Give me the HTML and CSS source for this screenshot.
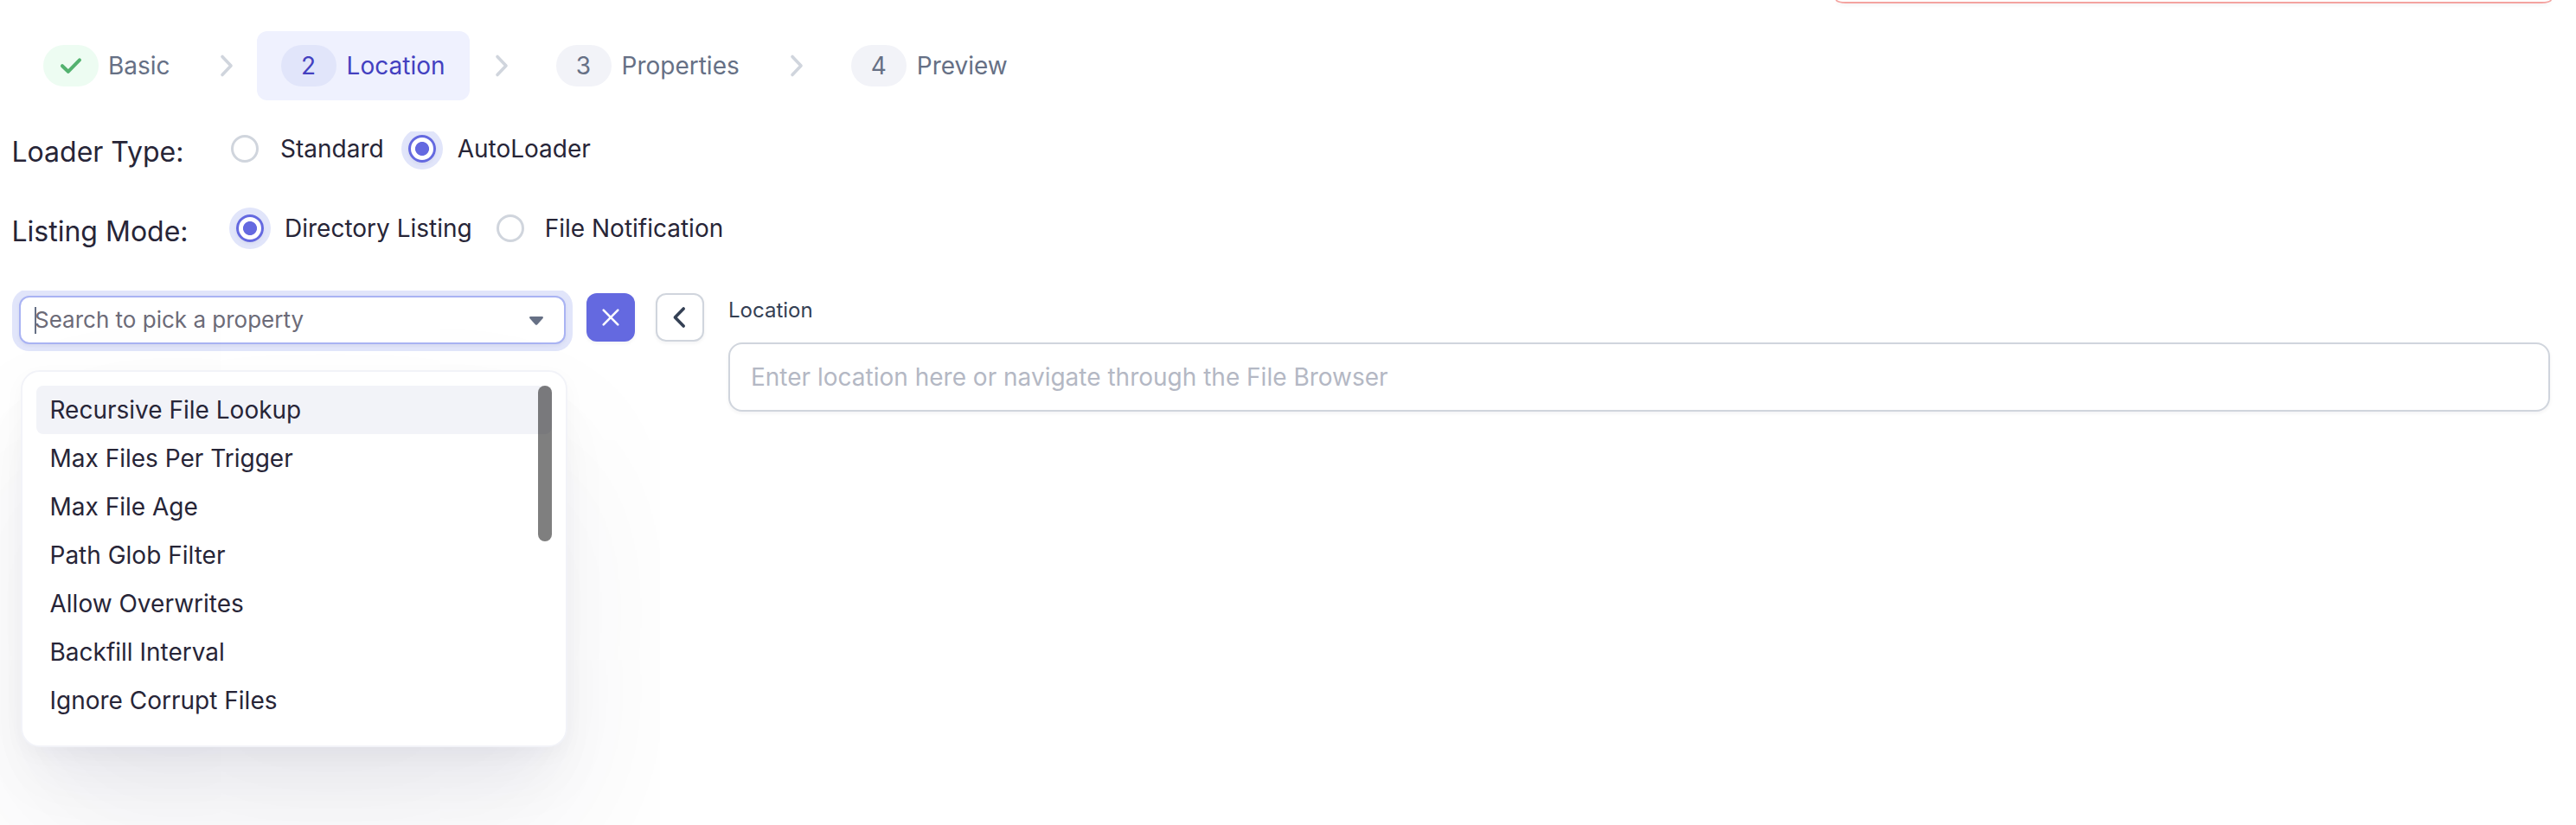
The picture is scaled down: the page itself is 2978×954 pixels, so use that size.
FILE: index.html
```html
<!DOCTYPE html>
<html lang="en">
<head>
<meta charset="utf-8">
<title>Location</title>
<link rel="stylesheet" href="styles.css">
</head>
<body>
<div class="alert"></div>
<nav class="steps">
  <div class="step step-done">
    <span class="badge badge-done"><svg width="28" height="24" viewBox="0 0 28 24"><path d="M4 12.2 10.8 18.8 24 5.4"/></svg></span>
    <span>Basic</span>
  </div>
  <svg class="sep" width="72" height="40" viewBox="0 0 72 40"><path d="M32 9.5 42 20 32 30.5"/></svg>
  <div class="step step-active">
    <span class="badge">2</span>
    <span>Location</span>
  </div>
  <svg class="sep" width="72" height="40" viewBox="0 0 72 40"><path d="M32 9.5 42 20 32 30.5"/></svg>
  <div class="step step-wide">
    <span class="badge">3</span>
    <span>Properties</span>
  </div>
  <svg class="sep" width="72" height="40" viewBox="0 0 72 40"><path d="M32 9.5 42 20 32 30.5"/></svg>
  <div class="step">
    <span class="badge">4</span>
    <span>Preview</span>
  </div>
</nav>

<div class="field loader">
  <div class="field-label">Loader Type:</div>
  <div class="options">
    <label class="option"><span class="radio"></span>Standard</label>
    <label class="option"><span class="radio radio-on"></span>AutoLoader</label>
  </div>
</div>
<div class="field listing">
  <div class="field-label">Listing Mode:</div>
  <div class="options">
    <label class="option"><span class="radio radio-on"></span>Directory Listing</label>
    <label class="option"><span class="radio"></span>File Notification</label>
  </div>
</div>

<main class="main">
  <div class="picker">
    <div class="select-clip">
      <div class="select">
        <span class="caret"></span>
        <span class="select-text">Search to pick a property</span>
        <svg width="16" height="10" viewBox="0 0 16 10"><path d="M1.4 0h13.2c1.2 0 1.8 1.3.9 2.2L9.2 9.2c-.7.8-1.7.8-2.4 0L.5 2.2C-.4 1.3.2 0 1.4 0z"/></svg>
      </div>
    </div>
    <div class="menu">
      <ul class="menu-list">
        <li class="item item-active">Recursive File Lookup</li>
        <li class="item">Max Files Per Trigger</li>
        <li class="item">Max File Age</li>
        <li class="item">Path Glob Filter</li>
        <li class="item">Allow Overwrites</li>
        <li class="item">Backfill Interval</li>
        <li class="item">Ignore Corrupt Files</li>
      </ul>
      <span class="thumb"></span>
    </div>
  </div>
  <button class="btn btn-primary" aria-label="Clear"><svg width="24" height="24" viewBox="0 0 24 24"><path d="M3.7 3.7 20.3 20.3M20.3 3.7 3.7 20.3"/></svg></button>
  <button class="btn btn-plain" aria-label="Back"><svg width="24" height="28" viewBox="0 0 24 28"><path d="M16.2 4 6.4 14 16.2 24"/></svg></button>
  <div class="location">
    <label class="location-label" for="loc">Location</label>
    <input class="location-input" id="loc" type="text" placeholder="Enter location here or navigate through the File Browser">
  </div>
</main>
</body>
</html>
```
FILE: styles.css
```css
* { box-sizing: border-box; }

body {
  margin: 0;
  height: 954px;
  overflow: hidden;
  background: #fff;
  color: #272537;
  font-family: Inter, "Liberation Sans", sans-serif;
  font-size: 28px;
  line-height: 40px;
}

.alert {
  width: 828px;
  height: 4px;
  margin-left: 2122px;
  border: 2px solid #f4a3a0;
  border-top: 0;
  border-radius: 0 0 12px 12px / 0 0 4px 4px;
  box-shadow: 0 2px 4px rgba(16, 24, 40, 0.05);
}

/* Step indicator */
.steps {
  display: flex;
  align-items: center;
  height: 80px;
  margin: 32px 0 0 22px;
  color: #667085;
}

.step {
  display: flex;
  align-items: center;
  gap: 12px;
  height: 80px;
  padding: 0 28px;
  border-radius: 12px;
}

.step-done { gap: 11px; }
.step-wide { padding-right: 29px; }
.step-active { background: #eff1fe; color: #4340c0; }

.badge {
  display: flex;
  align-items: center;
  justify-content: center;
  width: 64px;
  height: 48px;
  border-radius: 24px;
  background: #f2f3f8;
}

.step-active .badge { background: #e1e5fa; }
.badge-done { background: #edfcf2; }

.badge svg, .sep, .btn svg {
  fill: none;
  stroke-linecap: round;
  stroke-linejoin: round;
}

.badge svg { stroke: #53b26f; stroke-width: 4; }
.sep { stroke: #d0d5dd; stroke-width: 3.6; }

/* Radio rows */
.field { display: flex; align-items: flex-start; }
.field-label { font-size: 32px; line-height: 39px; margin-left: 13.5px; }

.loader { height: 48px; margin-top: 36px; }
.loader .field-label { width: 245.5px; padding-top: 4px; }
.loader .options { padding: 4px 8px 12px; overflow: hidden; }
.loader .option { gap: 25px; }

.listing { height: 48px; margin-top: 40px; }
.listing .field-label { width: 251.5px; padding-top: 8px; }
.listing .options { padding: 8px; }

.options { display: flex; gap: 28px; }
.option { display: flex; align-items: center; gap: 24px; height: 32px; }

.radio {
  width: 32px;
  height: 32px;
  border: 3px solid #d0d5dd;
  border-radius: 50%;
  background: #fff;
}

.radio-on {
  border-color: #6469e0;
  background: radial-gradient(circle, #6469e0 7.6px, #fff 8.4px);
  box-shadow: 0 2px 4px rgba(16, 24, 40, 0.05), 0 0 0 8px #e1e5fa;
}

/* Property picker and location */
.main { display: flex; align-items: flex-start; margin-top: 48px; }
.picker { width: 664px; position: relative; }
.select-clip { padding: 6px 10px 10px 22px; overflow: hidden; }

.select {
  display: flex;
  align-items: center;
  height: 56px;
  padding: 0 24px 0 16px;
  border: 2px solid #a9b3f3;
  border-radius: 12px;
  background: #fff;
  box-shadow: 0 2px 4px rgba(16, 24, 40, 0.05), 0 0 0 8px #e1e5fa;
  color: #6c6b78;
  font-size: 26px;
}

.select svg { margin: 2px 0 0 auto; fill: #667085; }
.caret { width: 2px; height: 31px; margin-right: -2px; background: #667085; }

.menu {
  position: absolute;
  top: 92px;
  left: 24px;
  width: 632px;
  height: 436px;
  padding: 16px;
  border: 2px solid #f2f3f8;
  border-radius: 22px;
  background: #fff;
  box-shadow:
    0 8px 24px rgba(20, 22, 60, 0.03),
    0 48px 72px -16px rgba(20, 22, 60, 0.06),
    0 96px 200px rgba(20, 22, 60, 0.065);
}

.menu-list { margin: 0; padding: 0; list-style: none; }
.item { height: 56px; padding: 0 15.5px; border-radius: 8px; line-height: 56px; }
.item-active { background: #f2f3f8; }

.thumb {
  position: absolute;
  top: 16px;
  right: 16px;
  width: 16px;
  height: 180px;
  border-radius: 8px;
  background: rgba(0, 0, 0, 0.5);
}

.btn {
  display: flex;
  align-items: center;
  justify-content: center;
  width: 56px;
  height: 56px;
  margin: 3px 0 0;
  padding: 0;
  border-radius: 12px;
}

.btn-primary {
  margin-left: 14px;
  border: 0;
  background: #6469e0;
  box-shadow: 0 2px 4px rgba(16, 24, 40, 0.05);
}

.btn-primary svg { stroke: #fff; stroke-width: 2.6; }

.btn-plain {
  margin-left: 24px;
  border: 2px solid #d0d5dd;
  background: #fff;
  box-shadow: 0 2px 4px rgba(16, 24, 40, 0.05);
}

.btn-plain svg { stroke: #344054; stroke-width: 3.6; }

.location {
  display: flex;
  flex-direction: column;
  flex: 1;
  gap: 17px;
  margin: 3px 30px 0 28px;
}

.location-label { color: #344054; font-size: 24px; }

.location-input {
  width: 100%;
  height: 80px;
  padding: 0 24px;
  border: 2px solid #d0d5dd;
  border-radius: 16px;
  background: #fff;
  box-shadow: 0 2px 4px rgba(16, 24, 40, 0.05);
  font: inherit;
}

.location-input::placeholder { color: #b4b8c4; opacity: 1; }
```
